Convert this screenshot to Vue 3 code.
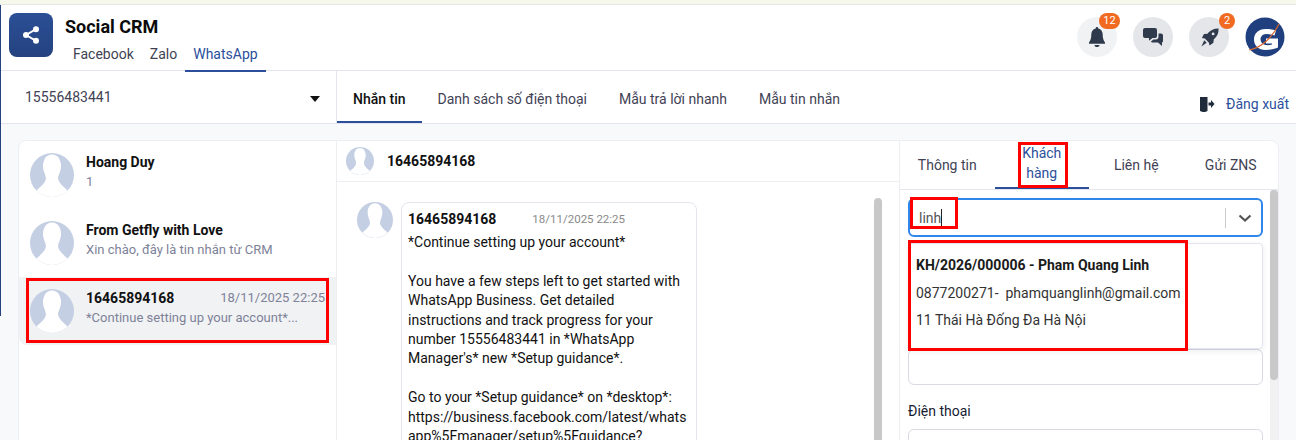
<template>
  <div class="page">
    <span class="edge"></span>
    <header class="topbar">
      <div class="logo">
        <svg width="20" height="20" viewBox="0 0 24 24" fill="#fff">
          <circle cx="18" cy="5" r="3.6" /><circle cx="6" cy="12" r="3.6" /><circle cx="18" cy="19" r="3.6" />
          <path d="M6 12 18 5M6 12l12 7" stroke="#fff" stroke-width="2.4" fill="none" />
        </svg>
      </div>
      <div class="brand">
        <div class="brand-title">Social CRM</div>
        <nav class="channels">
          <a v-for="c in channels" :key="c" class="channel" :class="{ on: c === 'WhatsApp' }">{{ c }}</a>
        </nav>
      </div>
      <div class="actions">
        <div class="round light">
          <span class="badge badge-wide">12</span>
          <svg width="16" height="20" viewBox="0 0 16 20" fill="#2f3a4c">
            <path d="M8 0c.8 0 1.300.6 1.300 1.400C12.300 2 13.700 4.500 13.700 7.500c0 4 .7 5.500 2.300 8v1.300H0v-1.300c1.600-2.500 2.300-4 2.300-8 0-3 1.400-5.500 4.400-6.100C6.700.6 7.200 0 8 0z" />
            <path d="M5.500 18h5C10.500 19.400 9.300 20 8 20s-2.500-.6-2.500-2z" />
          </svg>
        </div>
        <div class="round">
          <svg width="20" height="18" viewBox="0 0 20 18" fill="#2f3a4c">
            <path d="M2 0h10a2 2 0 0 1 2 2v6a2 2 0 0 1-2 2H9.500L6 12.800V10H2a2 2 0 0 1-2-2V2a2 2 0 0 1 2-2z" />
            <path d="M15.500 5.500H18a2 2 0 0 1 2 2v5.500c0 .8-.5 1.300-1 1.500V18l-4-3.400H9.500c-.7 0-1.300-.4-1.500-1l2.500-2H13c1.500 0 2.500-1 2.500-2.500z" />
          </svg>
        </div>
        <div class="round">
          <span class="badge badge-dot">2</span>
          <svg width="19" height="19" viewBox="0 0 20 20" fill="#2f3a4c">
            <path d="M19.500.5c.3 4.200-1 7.700-4 10.500l-1 .8-.4 3.700L10 18.500l-.6-3.100-4.300-4.300L2 10.500l2.200-4.100 3.700-.4.800-1C11.500 2 15.300.2 19.500.5z" />
            <path d="M4.500 13 7 15.500 1.500 19.500z" />
            <circle cx="13.800" cy="6.200" r="1.500" fill="#e4e6ea" />
          </svg>
        </div>
        <div class="avatar-g">
          <svg width="40" height="40" viewBox="0 0 40 40">
            <circle cx="20" cy="20" r="19.500" fill="#1f3f7e" />
            <path d="M31 13.500C28 12.300 24 12 20.500 12 13.500 12 9 16.500 9 22.500S13.500 33 20.500 33c4.500 0 9-1 12.500-2.500V21.500H21v5h6v1c-2 .6-4.500.8-6.500.5-3-.5-5-3-5-5.500s2-5.500 5.500-5.500c3 0 6 .5 8.500 1.500z" fill="#fff" />
            <path d="M4 33C16 31 27 21 34 7" stroke="#d9682f" stroke-width="1.200" fill="none" />
          </svg>
        </div>
      </div>
    </header>

    <div class="subbar">
      <div class="account">
        <span>15556483441</span>
        <span class="caret"></span>
      </div>
      <nav class="subtabs">
        <a v-for="t in subtabs" :key="t" class="subtab" :class="{ on: t === 'Nhắn tin' }">{{ t }}</a>
      </nav>
      <a class="logout">
        <svg width="16" height="16" viewBox="0 0 16 16" fill="#1f2b3a">
          <path d="M1 1h7.500v14L5 16.500 1 15z" />
          <path d="M9.500 6.500H12V4l3.500 4-3.500 4V9.500H9.500z" />
        </svg>
        <span>Đăng xuất</span>
      </a>
    </div>

    <main class="body">
      <section class="card">
        <aside class="convs">
          <div v-for="c in convs" :key="c.name" class="conv" :class="{ active: c.active }">
            <svg class="ava" viewBox="0 0 44 44"><use href="#person" /></svg>
            <div class="conv-main">
              <div class="conv-top">
                <b>{{ c.name }}</b>
                <span v-if="c.time" class="conv-time">{{ c.time }}</span>
              </div>
              <div class="conv-sub">{{ c.sub }}</div>
            </div>
            <span v-if="c.active" class="mark mark-conv"></span>
          </div>
        </aside>

        <section class="chat">
          <div class="chat-head">
            <svg class="ava small" viewBox="0 0 44 44"><use href="#person" /></svg>
            <b>16465894168</b>
          </div>
          <div class="chat-body">
            <div class="msg">
              <svg class="ava mid" viewBox="0 0 44 44"><use href="#person" /></svg>
              <div class="bubble">
                <div class="bubble-head">
                  <b>16465894168</b>
                  <span>18/11/2025 22:25</span>
                </div>
                <div class="bubble-text">{{ message }}</div>
              </div>
            </div>
            <div class="thumb chat-thumb"></div>
          </div>
        </section>

        <aside class="side">
          <nav class="side-tabs">
            <a class="side-tab">Thông tin</a>
            <a class="side-tab on">
              <span class="tab-label">Khách<br />hàng<span class="mark mark-tab"></span></span>
            </a>
            <a class="side-tab">Liên hệ</a>
            <a class="side-tab">Gửi ZNS</a>
          </nav>
          <div class="side-body">
            <div class="select">
              <span class="select-value">linh<i class="cursor"></i><span class="mark mark-input"></span></span>
              <span class="select-sep"></span>
              <svg width="14" height="14" viewBox="0 0 14 14" fill="none" stroke="#555" stroke-width="2.200"><path d="M1.500 4.500 7 9.500l5.500-5" /></svg>
            </div>
            <div class="menu">
              <div class="menu-title">KH/2026/000006 - Pham Quang Linh</div>
              <div class="menu-line">0877200271-&nbsp; phamquanglinh@gmail.com</div>
              <div class="menu-line">11 Thái Hà Đống Đa Hà Nội</div>
              <span class="mark mark-menu"></span>
            </div>
            <div class="field"></div>
            <label class="field-label">Điện thoại</label>
            <div class="field"></div>
            <div class="track"><div class="thumb side-thumb"></div></div>
          </div>
        </aside>
      </section>
    </main>

    <svg width="0" height="0" class="defs">
      <symbol id="person" viewBox="0 0 44 44">
        <circle cx="22" cy="22" r="22" fill="#c4cfe3" />
        <path fill="#fff" d="M22 1.500C28 1.500 31 7 31 13c0 5-2.500 8-2.900 12-.3 3.500 4 8 9.500 12.400A22 22 0 0 1 6.400 37.400C12 33 16.200 28.500 15.900 25 15.500 21 13 18 13 13 13 7 16 1.500 22 1.500z" />
      </symbol>
    </svg>
  </div>
</template>

<script setup>
const channels = ['Facebook', 'Zalo', 'WhatsApp']
const subtabs = ['Nhắn tin', 'Danh sách số điện thoại', 'Mẫu trả lời nhanh', 'Mẫu tin nhắn']

const convs = [
  { name: 'Hoang Duy', sub: '1' },
  { name: 'From Getfly with Love', sub: 'Xin chào, đây là tin nhắn từ CRM' },
  { name: '16465894168', sub: '*Continue setting up your account*...', time: '18/11/2025 22:25', active: true },
]

const message = `*Continue setting up your account*

You have a few steps left to get started with
WhatsApp Business. Get detailed
instructions and track progress for your
number 15556483441 in *WhatsApp
Manager's* new *Setup guidance*.

Go to your *Setup guidance* on *desktop*:
https://business.facebook.com/latest/whats
app%5Fmanager/setup%5Fguidance?`
</script>

<style>
html, body { margin: 0; height: 100%; overflow: hidden; background: #fff; }
</style>

<style scoped>
.page {
  position: relative;
  width: 1296px;
  height: 440px;
  overflow: hidden;
  display: flex;
  flex-direction: column;
  font-family: Roboto, "Liberation Sans", sans-serif;
  font-size: 14px;
  color: #1a2233;
  background: #fff;
  border-top: 4px solid #f6f8ec;
  box-sizing: border-box;
}
.defs { position: absolute; }
.edge { position: absolute; left: 0; top: 1px; width: 1px; height: 311px; background: #24427f; z-index: 1; }

.topbar {
  flex: none;
  height: 67px;
  box-sizing: border-box;
  display: flex;
  align-items: flex-start;
  padding: 8px 11px 0 9px;
  border-top: 1px solid #e4e6e8;
  border-bottom: 1px solid #e4e6ef;
}
.logo {
  width: 44px;
  height: 44px;
  border-radius: 8px;
  background: linear-gradient(180deg, #2b4f96, #24427f);
  display: flex;
  align-items: center;
  justify-content: center;
}
.brand { margin-left: 12px; }
.brand-title { font-size: 18px; font-weight: 700; line-height: 20px; margin-top: 4px; color: #0b0b0b; }
.channels { display: flex; margin-top: 2px; }
.channel { padding: 5px 8px 6px; line-height: 20px; font-size: 14px; color: #3f4254; }
.channel.on { color: #2c4f9b; border-bottom: 2px solid #2c4f9b; }

.actions { margin-left: auto; display: flex; align-items: center; gap: 16px; margin-top: 4px; }
.round {
  position: relative;
  width: 40px;
  height: 40px;
  border-radius: 50%;
  background: #e4e6ea;
  display: flex;
  align-items: center;
  justify-content: center;
}
.round.light { background: #f1f2f4; }
.badge {
  position: absolute;
  top: -4px;
  height: 16px;
  border-radius: 8px;
  background: #f26a21;
  color: #fff;
  font-size: 11px;
  line-height: 16px;
  text-align: center;
}
.badge-wide { left: 22px; width: 21px; }
.badge-dot { left: 30px; width: 16px; }
.avatar-g { width: 40px; height: 40px; }

.subbar {
  flex: none;
  height: 53px;
  box-sizing: border-box;
  display: flex;
  border-bottom: 1px solid #e4e6ef;
}
.account {
  width: 337px;
  box-sizing: border-box;
  display: flex;
  align-items: center;
  justify-content: space-between;
  padding: 0 16px 0 25px;
  font-size: 14px;
  color: #3f4254;
  border-right: 1px solid #e4e6ef;
}
.caret { width: 0; height: 0; margin-top: 3px; border: 5px solid transparent; border-top: 6px solid #111; border-bottom: 0; }
.subtabs { display: flex; }
.subtab {
  padding: 7px 16px 0;
  line-height: 43px;
  height: 52px;
  box-sizing: border-box;
  color: #3f4254;
}
.subtab.on { color: #111; font-weight: 500; border-bottom: 2px solid #2c4f9b; }
.logout { margin-left: auto; display: flex; align-items: center; gap: 11px; padding: 13px 7px 0 0; color: #2c4f9b; }

.body { flex: 1; min-height: 0; background: #f8f9fb; padding: 16px 17px 0 18px; box-sizing: border-box; }
.card {
  height: 320px;
  display: flex;
  background: #fff;
  border: 1px solid #eceef2;
  border-radius: 8px;
  box-sizing: border-box;
}

.ava { width: 44px; height: 44px; flex: none; }
.ava.small { width: 28px; height: 28px; }
.ava.mid { width: 36px; height: 36px; }

.convs { width: 317px; flex: none; box-sizing: border-box; }
.conv { position: relative; display: flex; height: 68px; box-sizing: border-box; padding: 12px 11px 0 11px; gap: 12px; }
.conv.active { background: #f1f2f4; border-radius: 0 0 0 8px; }
.conv-main { flex: 1; min-width: 0; margin-top: -1px; }
.conv-top { display: flex; justify-content: space-between; line-height: 20px; color: #111; }
.conv-time { color: #7e8299; font-size: 13px; }
.conv-sub { margin-top: 1px; font-size: 13px; line-height: 18px; color: #7e8299; }

.chat { width: 564px; flex: none; display: flex; flex-direction: column; border-left: 1px solid #eceef2; border-right: 1px solid #eceef2; box-sizing: border-box; }
.chat-head { height: 41px; flex: none; box-sizing: border-box; display: flex; align-items: center; gap: 13px; padding-left: 9px; border-bottom: 1px solid #eceef2; color: #111; }
.chat-body { position: relative; flex: 1; min-height: 0; overflow: hidden; padding: 20px 0 0 20px; }
.msg { display: flex; gap: 8px; }
.bubble { width: 296px; box-sizing: border-box; padding: 6px 6px 8px 6px; border: 1px solid #e4e6ef; border-radius: 8px; }
.bubble-head { display: flex; gap: 36px; align-items: center; line-height: 20px; color: #111; }
.bubble-head span { font-size: 11.5px; color: #8a8a8a; }
.bubble-text { margin-top: 4px; white-space: pre-line; font-size: 14px; line-height: 19.4px; color: #111; }
.thumb { position: absolute; background: #c8c8c8; border-radius: 4px; width: 8px; }
.chat-thumb { right: 17px; top: 16px; height: 300px; }

.side { flex: 1; min-width: 0; display: flex; flex-direction: column; }
.side-tabs { flex: none; height: 49px; display: flex; box-sizing: border-box; border-bottom: 1px solid #e4e6ef; }
.side-tab {
  flex: 1 1 0;
  display: flex;
  align-items: center;
  justify-content: center;
  text-align: center;
  line-height: 20px;
  color: #3f4254;
  box-sizing: border-box;
}
.side-tab.on { color: #2c4f9b; border-bottom: 2px solid #2c4f9b; }
.tab-label { position: relative; display: block; margin-top: -3px; }
.side-body { position: relative; flex: 1; min-height: 0; overflow: hidden; padding: 8px 15px 0 8px; background: #fff; }
.select {
  height: 39px;
  box-sizing: border-box;
  display: flex;
  align-items: center;
  padding: 0 9px 0 9px;
  border: 2px solid #2f86eb;
  border-radius: 6px;
}
.select-value { position: relative; color: #555; flex: 1; margin-top: -1px; }
.cursor { display: inline-block; width: 1px; height: 17px; background: #222; vertical-align: -3px; }
.select-sep { width: 1px; height: 20px; background: #ccc; margin-right: 12px; }
.menu {
  position: relative;
  margin-top: 6px;
  height: 106px;
  box-sizing: border-box;
  padding: 11px 7px;
  border: 1px solid #e4e6ef;
  border-radius: 4px;
  box-shadow: 0 2px 6px rgba(0, 0, 0, .08);
  background: #fff;
  z-index: 1;
}
.menu-title { font-weight: 700; font-size: 14px; line-height: 20px; color: #1a1a1a; }
.menu-line { margin-top: 8px; font-size: 14px; line-height: 20px; color: #333; }
.menu-line + .menu-line { margin-top: 7px; }
.field { height: 36px; box-sizing: border-box; border: 1px solid #d8dae5; border-radius: 6px; }
.field-label { display: block; margin: 16px 0 8px; line-height: 20px; color: #181c32; }
.track { position: absolute; right: 0; top: 0; bottom: 0; width: 8px; background: #f1f1f1; }
.side-thumb { right: 0; top: 0; height: 190px; }

.mark { position: absolute; border: 3px solid #f00; box-sizing: border-box; pointer-events: none; z-index: 2; }
.mark-conv { left: 7px; top: 1px; width: 303px; height: 65px; }
.mark-tab { left: -4px; top: -1px; width: 50px; height: 46px; }
.mark-input { left: -9px; top: -12px; width: 48px; height: 32px; }
.mark-menu { left: -1px; top: -4px; width: 280px; height: 111px; }
</style>
